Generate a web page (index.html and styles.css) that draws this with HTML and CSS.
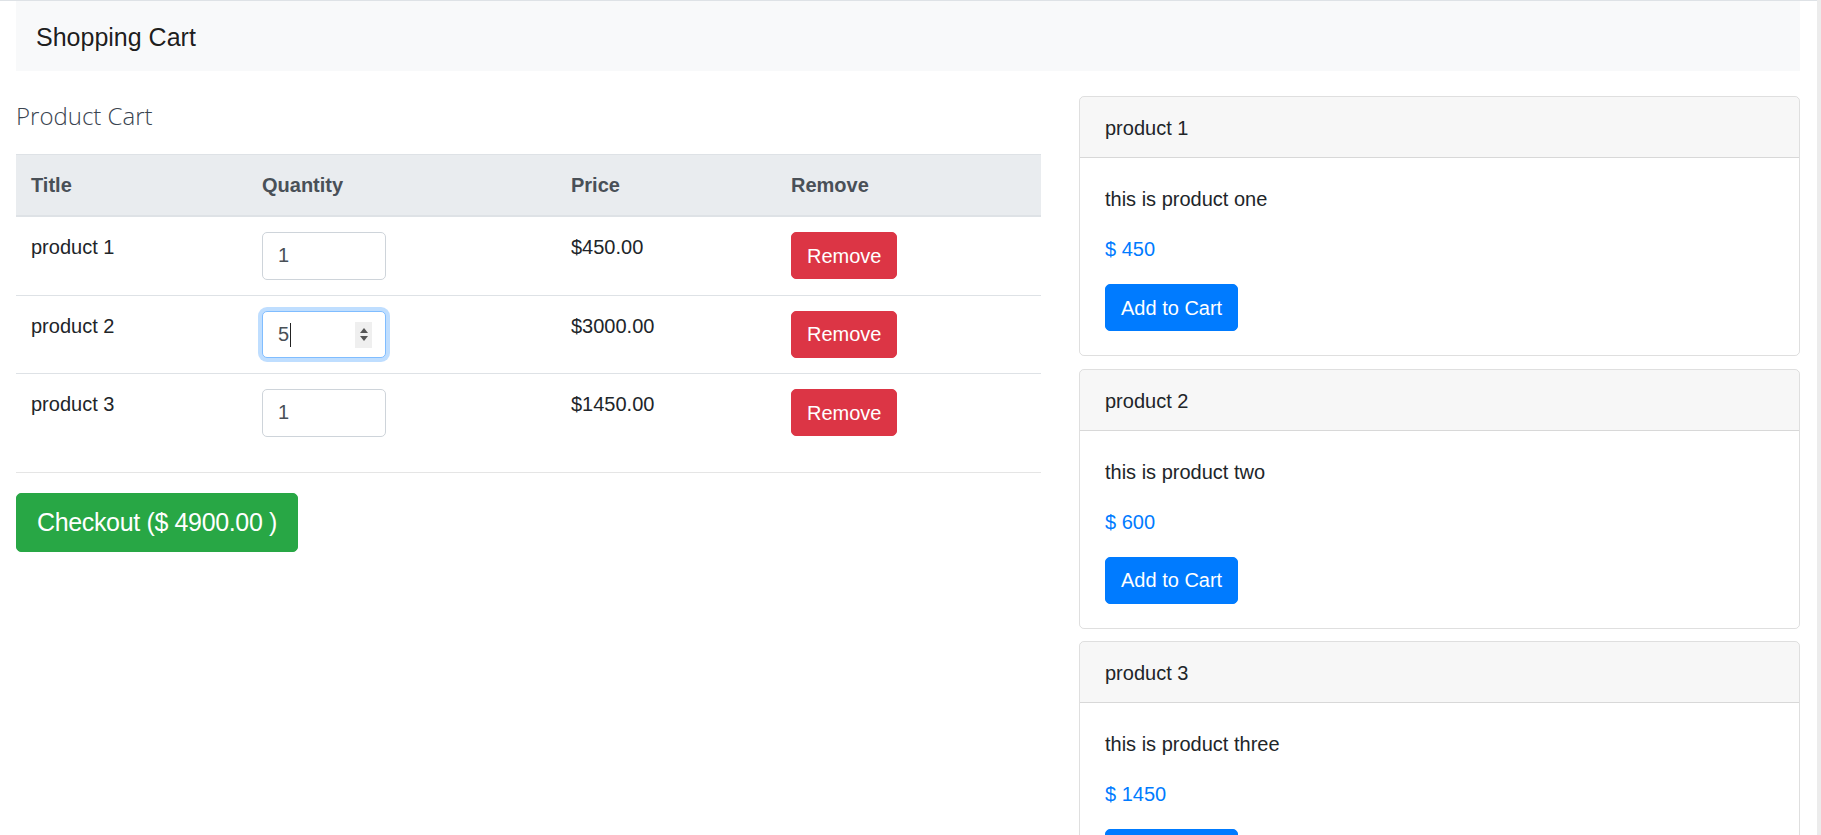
FILE: index.html
```
<!DOCTYPE html>
<html lang="en">
<head>
<meta charset="utf-8">
<title>Shopping Cart</title>
<link rel="stylesheet" href="styles.css">
</head>
<body>
<div class="page">
  <nav class="navbar">
    <span class="brand">Shopping Cart</span>
  </nav>
  <div class="layout">
    <section class="cart">
      <h4 class="cart-title">Product Cart</h4>
      <table class="table">
        <thead>
          <tr>
            <th class="c-title">Title</th>
            <th class="c-qty">Quantity</th>
            <th class="c-price">Price</th>
            <th class="c-remove">Remove</th>
          </tr>
        </thead>
        <tbody>
          <tr>
            <td>product 1</td>
            <td><input class="qty" type="text" value="1"></td>
            <td>$450.00</td>
            <td><button class="btn btn-danger">Remove</button></td>
          </tr>
          <tr>
            <td>product 2</td>
            <td>
              <div class="qty-wrap">
                <input class="qty qty-focus" type="text" value="5">
                <span class="caret"></span>
                <span class="spin"><span class="up"></span><span class="down"></span></span>
              </div>
            </td>
            <td>$3000.00</td>
            <td><button class="btn btn-danger">Remove</button></td>
          </tr>
          <tr>
            <td>product 3</td>
            <td><input class="qty" type="text" value="1"></td>
            <td>$1450.00</td>
            <td><button class="btn btn-danger">Remove</button></td>
          </tr>
        </tbody>
      </table>
      <hr class="divider">
      <button class="btn btn-success btn-lg">Checkout ($ 4900.00 )</button>
    </section>
    <aside class="products">
      <div class="card">
        <div class="card-header">product 1</div>
        <div class="card-body">
          <p class="card-text">this is product one</p>
          <p class="card-price">$ 450</p>
          <button class="btn btn-primary">Add to Cart</button>
        </div>
      </div>
      <div class="card">
        <div class="card-header">product 2</div>
        <div class="card-body">
          <p class="card-text">this is product two</p>
          <p class="card-price">$ 600</p>
          <button class="btn btn-primary">Add to Cart</button>
        </div>
      </div>
      <div class="card">
        <div class="card-header">product 3</div>
        <div class="card-body">
          <p class="card-text">this is product three</p>
          <p class="card-price">$ 1450</p>
          <button class="btn btn-primary">Add to Cart</button>
        </div>
      </div>
    </aside>
  </div>
</div>
</body>
</html>
```
FILE: styles.css
```
html {
  border-right: 4px solid #ececec;
}
body {
  margin: 0;
  border-top: 1px solid #dee2e6;
  font-family: "Liberation Sans", Arial, sans-serif;
  font-size: 20px;
  line-height: 30px;
  color: #212529;
  background: #fff;
}
.page {
  padding: 0 17px 0 16px;
}
.navbar {
  background: #f8f9fa;
  padding: 10px 20px;
}
.brand {
  display: inline-block;
  font-size: 25px;
  line-height: 37.5px;
  padding: 7.5px 0 5px;
  color: rgba(0, 0, 0, 0.9);
}
.layout {
  display: grid;
  grid-template-columns: 1025px 1fr;
  column-gap: 38px;
  margin-top: 25px;
  align-items: start;
}
.cart-title {
  margin: 5px 0 23px;
  font-family: "Open Sans", "Liberation Sans", sans-serif;
  font-weight: 300;
  font-size: 24px;
  line-height: 30px;
  color: #3a4450;
}
.table {
  width: 100%;
  table-layout: fixed;
  border-collapse: collapse;
  margin-bottom: 20px;
}
.table th {
  text-align: left;
  padding: 15px;
  background: #e9ecef;
  color: #495057;
  font-weight: 700;
  border-top: 1px solid #dee2e6;
  border-bottom: 2px solid #dee2e6;
  vertical-align: bottom;
}
.table td {
  padding: 15px;
  border-top: 1px solid #dee2e6;
  vertical-align: top;
}
.c-title { width: 201px; }
.c-qty { width: 279px; }
.c-price { width: 190px; }
.c-remove { width: auto; }
.qty {
  display: block;
  box-sizing: border-box;
  width: 124px;
  height: 47.5px;
  padding: 7.5px 15px;
  font: inherit;
  color: #495057;
  background: #fff;
  border: 1px solid #ced4da;
  border-radius: 5px;
  outline: none;
}
.qty-wrap {
  position: relative;
  width: 124px;
}
.qty-focus {
  border-color: #80bdff;
  box-shadow: 0 0 0 4px rgba(0, 123, 255, 0.25);
}
.caret {
  position: absolute;
  left: 28px;
  top: 12px;
  width: 1px;
  height: 24px;
  background: #222;
}
.spin {
  position: absolute;
  right: 14px;
  top: 11px;
  width: 17px;
  height: 26px;
  background: #efefef;
  display: flex;
  flex-direction: column;
  align-items: center;
  justify-content: center;
  gap: 3px;
}
.spin .up {
  width: 0;
  height: 0;
  border-left: 4.5px solid transparent;
  border-right: 4.5px solid transparent;
  border-bottom: 5px solid #555;
}
.spin .down {
  width: 0;
  height: 0;
  border-left: 4.5px solid transparent;
  border-right: 4.5px solid transparent;
  border-top: 5px solid #555;
}
.btn {
  display: inline-block;
  font: inherit;
  line-height: 30px;
  padding: 7.5px 15px;
  border: 1px solid transparent;
  border-radius: 5px;
  color: #fff;
  cursor: pointer;
}
.btn-danger {
  background: #dc3545;
  border-color: #dc3545;
}
.btn-primary {
  background: #007bff;
  border-color: #007bff;
}
.btn-success {
  background: #28a745;
  border-color: #28a745;
}
.btn-lg {
  font-size: 25px;
  line-height: 37.5px;
  padding: 10px 20px;
  letter-spacing: -0.35px;
}
.divider {
  border: 0;
  border-top: 1px solid rgba(0, 0, 0, 0.1);
  margin: 0 0 20px;
}
.card {
  border: 1px solid rgba(0, 0, 0, 0.125);
  border-radius: 5px;
  margin-bottom: 12.5px;
  overflow: hidden;
}
.card-header {
  padding: 16px 25px 14px;
  background: rgba(0, 0, 0, 0.03);
  border-bottom: 1px solid rgba(0, 0, 0, 0.125);
}
.card-body {
  padding: 26px 25px 24px;
}
.card-text,
.card-price {
  margin: 0 0 20px;
}
.card-price {
  color: #007bff;
}
```
